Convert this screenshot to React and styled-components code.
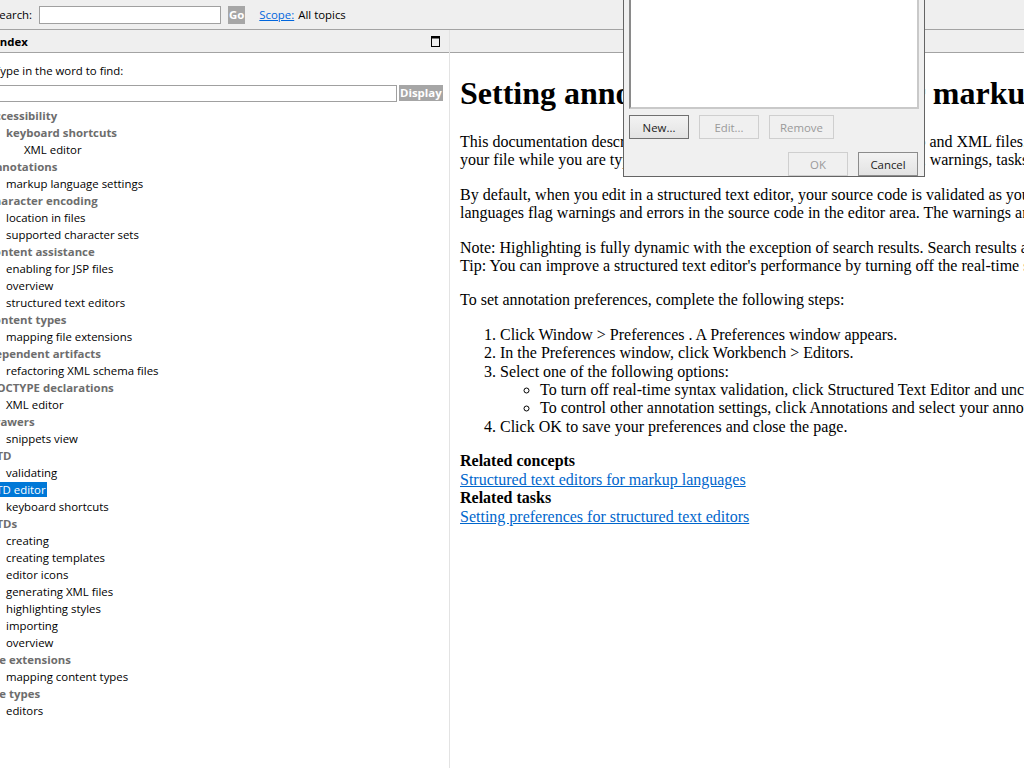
import styled, { createGlobalStyle } from "styled-components";

const GlobalStyle = createGlobalStyle`
  html, body {
    margin: 0;
    padding: 0;
    background: #ffffff;
  }
  body {
    font-family: "Open Sans", "Noto Sans", sans-serif;
  }
`;

const ui = `"Open Sans", "Noto Sans", sans-serif`;
const serif = `"Liberation Serif", "Times New Roman", serif`;

const indexItems = [
  { text: "accessibility", level: 0 },
  { text: "keyboard shortcuts", level: 1, group: true },
  { text: "XML editor", level: 2 },
  { text: "annotations", level: 0 },
  { text: "markup language settings", level: 1 },
  { text: "character encoding", level: 0 },
  { text: "location in files", level: 1 },
  { text: "supported character sets", level: 1 },
  { text: "content assistance", level: 0 },
  { text: "enabling for JSP files", level: 1 },
  { text: "overview", level: 1 },
  { text: "structured text editors", level: 1 },
  { text: "content types", level: 0 },
  { text: "mapping file extensions", level: 1 },
  { text: "dependent artifacts", level: 0 },
  { text: "refactoring XML schema files", level: 1 },
  { text: "DOCTYPE declarations", level: 0 },
  { text: "XML editor", level: 1 },
  { text: "drawers", level: 0 },
  { text: "snippets view", level: 1 },
  { text: "DTD", level: 0 },
  { text: "validating", level: 1 },
  { text: "DTD editor", level: 0, selected: true },
  { text: "keyboard shortcuts", level: 1 },
  { text: "DTDs", level: 0 },
  { text: "creating", level: 1 },
  { text: "creating templates", level: 1 },
  { text: "editor icons", level: 1 },
  { text: "generating XML files", level: 1 },
  { text: "highlighting styles", level: 1 },
  { text: "importing", level: 1 },
  { text: "overview", level: 1 },
  { text: "file extensions", level: 0 },
  { text: "mapping content types", level: 1 },
  { text: "file types", level: 0 },
  { text: "editors", level: 1 },
];

const App = () => {
  return (
    <Page>
      <GlobalStyle />
      <TopBar>
        <BarLabel>Search:</BarLabel>
        <SearchInput />
        <GrayButton>Go</GrayButton>
        <ScopeLink>Scope:</ScopeLink>
        <BarText>All topics</BarText>
      </TopBar>
      <Main>
        <LeftPane>
          <PaneHeader>
            <PaneTitle>Index</PaneTitle>
            <svg width="9" height="11" viewBox="0 0 9 11">
              <rect x="0.5" y="0.5" width="8" height="10" fill="none" stroke="#000" />
              <rect x="0" y="0" width="9" height="2.5" fill="#000" />
            </svg>
          </PaneHeader>
          <IndexBody>
            <FindLabel>Type in the word to find:</FindLabel>
            <FindRow>
              <FindInput />
              <GrayButton small>Display</GrayButton>
            </FindRow>
            <Tree>
              {indexItems.map((item, i) => (
                <TreeRow key={i} level={item.level}>
                  <TreeText
                    bold={(item.level === 0 || item.group) && !item.selected}
                    selected={item.selected}
                  >
                    {item.text}
                  </TreeText>
                </TreeRow>
              ))}
            </Tree>
          </IndexBody>
        </LeftPane>
        <RightPane>
          <PaneHeader />
          <Content>
            <Title>Setting annotation preferences for markup languages</Title>
            <Para>
              This documentation describes how to set annotation preferences for Web and XML files. The annotation preferences include whether to analyze the syntax of
              <br />
              your file while you are typing, and whether to show and highlight errors, warnings, tasks, search results, and bookmarks.
            </Para>
            <Para>
              By default, when you edit in a structured text editor, your source code is validated as you type it in. Like other editors, the structured text editors for markup
              <br />
              languages flag warnings and errors in the source code in the editor area. The warnings and errors also appear in the Problems view when you save your file.
            </Para>
            <Para>
              Note: Highlighting is fully dynamic with the exception of search results. Search results are highlighted only when you run a search.
              <br />
              Tip: You can improve a structured text editor's performance by turning off the real-time syntax validation.
            </Para>
            <Para>To set annotation preferences, complete the following steps:</Para>
            <Steps>
              <li>Click Window &gt; Preferences . A Preferences window appears.</li>
              <li>In the Preferences window, click Workbench &gt; Editors.</li>
              <li>
                Select one of the following options:
                <SubSteps>
                  <li>To turn off real-time syntax validation, click Structured Text Editor and uncheck the Analyze annotations while typing check box.</li>
                  <li>To control other annotation settings, click Annotations and select your annotation options.</li>
                </SubSteps>
              </li>
              <li>Click OK to save your preferences and close the page.</li>
            </Steps>
            <Related>
              <strong>Related concepts</strong>
              <br />
              <DocLink href="#">Structured text editors for markup languages</DocLink>
              <br />
              <strong>Related tasks</strong>
              <br />
              <DocLink href="#">Setting preferences for structured text editors</DocLink>
            </Related>
          </Content>
        </RightPane>
      </Main>
      <Dialog>
        <ListBox />
        <ButtonRow>
          <DlgButton isDefault>New...</DlgButton>
          <DlgButton disabled>Edit...</DlgButton>
          <DlgButton disabled wide>Remove</DlgButton>
        </ButtonRow>
        <ButtonRow end>
          <DlgButton disabled>OK</DlgButton>
          <DlgButton>Cancel</DlgButton>
        </ButtonRow>
      </Dialog>
    </Page>
  );
};

export default App;

const Page = styled.div`
  position: relative;
  width: 1024px;
  height: 768px;
  overflow: hidden;
  display: flex;
  flex-direction: column;
`;

const TopBar = styled.div`
  height: 29px;
  flex-shrink: 0;
  display: flex;
  align-items: center;
  background: #efefef;
  border-bottom: 1px solid #a3a3a3;
  font-family: ${ui};
  font-size: 11.4px;
  color: #000;
`;

const BarLabel = styled.span`
  margin-left: -7px;
  width: 46px;
`;

const SearchInput = styled.input`
  box-sizing: border-box;
  width: 182px;
  height: 18px;
  margin: 0;
  border: 1px solid #a0a0a0;
  background: #fff;
  padding: 0 2px;
`;

const GrayButton = styled.button`
  box-sizing: border-box;
  height: ${({ small }) => (small ? "16px" : "18px")};
  margin: 0 0 0 ${({ small }) => (small ? "2px" : "7px")};
  padding: 0 1px;
  border: none;
  background: #a6a6a6;
  color: #fff;
  font-family: ${ui};
  font-weight: 700;
  font-size: 11.4px;
  line-height: 16px;
`;

const ScopeLink = styled.a`
  margin-left: 14px;
  color: #0066dd;
  text-decoration: underline;
`;

const BarText = styled.span`
  margin-left: 4px;
`;

const Main = styled.div`
  flex: 1;
  display: flex;
  min-height: 0;
`;

const LeftPane = styled.div`
  width: 449px;
  flex-shrink: 0;
  border-right: 1px solid #e3e3e3;
  overflow: hidden;
  display: flex;
  flex-direction: column;
`;

const PaneHeader = styled.div`
  height: 22px;
  flex-shrink: 0;
  display: flex;
  align-items: center;
  justify-content: space-between;
  padding-right: 9px;
  background: #efefef;
  border-bottom: 1px solid #a3a3a3;
`;

const PaneTitle = styled.span`
  margin-left: -4px;
  font-family: ${ui};
  font-size: 11.4px;
  font-weight: 700;
  color: #000;
`;

const IndexBody = styled.div`
  margin-left: -14px;
  padding-top: 9px;
  font-family: ${ui};
  font-size: 11.4px;
`;

const FindLabel = styled.div`
  padding-left: 8px;
  line-height: 17px;
  color: #000;
`;

const FindRow = styled.div`
  display: flex;
  align-items: flex-start;
  margin-top: 6px;
`;

const FindInput = styled.input`
  box-sizing: border-box;
  width: 411px;
  height: 17px;
  margin: 0;
  border: 1px solid #a0a0a0;
  background: #fff;
`;

const Tree = styled.div`
  margin-top: 5px;
`;

const TreeRow = styled.div`
  height: 17px;
  line-height: 17px;
  padding-left: ${({ level }) => 1 + level * 18}px;
  white-space: nowrap;
`;

const TreeText = styled.span`
  padding: 0 1px;
  font-weight: ${({ bold }) => (bold ? 700 : 400)};
  color: ${({ bold, selected }) => (selected ? "#fff" : bold ? "#6d6d6d" : "#000")};
  background: ${({ selected }) => (selected ? "#0078d7" : "transparent")};
`;

const RightPane = styled.div`
  flex: 1;
  display: flex;
  flex-direction: column;
  min-width: 0;
  overflow: hidden;
`;

const Content = styled.div`
  padding-left: 10px;
  font-family: ${serif};
  font-size: 16px;
  line-height: 18.4px;
  color: #000;
  white-space: nowrap;
`;

const Title = styled.h1`
  font-size: 32px;
  line-height: 37px;
  font-weight: 700;
  margin: 22px 0 21px;
`;

const Para = styled.p`
  margin: 16px 0;
`;

const Steps = styled.ol`
  margin: 16px 0;
  padding-left: 40px;
`;

const SubSteps = styled.ul`
  margin: 0;
  padding-left: 40px;
  list-style: circle;
`;

const Related = styled.div``;

const DocLink = styled.a`
  color: #0066cc;
  text-decoration: underline;
`;

const Dialog = styled.div`
  position: absolute;
  left: 623px;
  top: -8px;
  width: 302px;
  height: 185px;
  box-sizing: border-box;
  border: 1px solid #646464;
  background: #f0f0f0;
  padding: 0 5px;
  display: flex;
  flex-direction: column;
  font-family: ${ui};
  font-size: 11.4px;
`;

const ListBox = styled.div`
  height: 118px;
  box-sizing: border-box;
  border: 2px solid;
  border-color: #8a8a8a #c9c9c9 #c9c9c9 #8a8a8a;
  background: #fff;
`;

const ButtonRow = styled.div`
  display: flex;
  gap: 10px;
  justify-content: ${({ end }) => (end ? "flex-end" : "flex-start")};
  margin-top: ${({ end }) => (end ? "13px" : "6px")};
  padding-right: ${({ end }) => (end ? "1px" : "0")};
`;

const DlgButton = styled.button`
  box-sizing: border-box;
  width: ${({ wide }) => (wide ? "65px" : "60px")};
  height: 24px;
  margin: 0;
  padding: 0;
  font-family: ${ui};
  font-size: 11.4px;
  color: ${({ disabled }) => (disabled ? "#9a9a9a" : "#222")};
  background: ${({ disabled }) =>
    disabled ? "#f0f0f0" : "linear-gradient(#f3f3f3, #e3e3e3)"};
  border: 1px solid
    ${({ disabled, isDefault }) =>
      disabled ? "#cfcfcf" : isDefault ? "#707070" : "#8c8c8c"};
`;
